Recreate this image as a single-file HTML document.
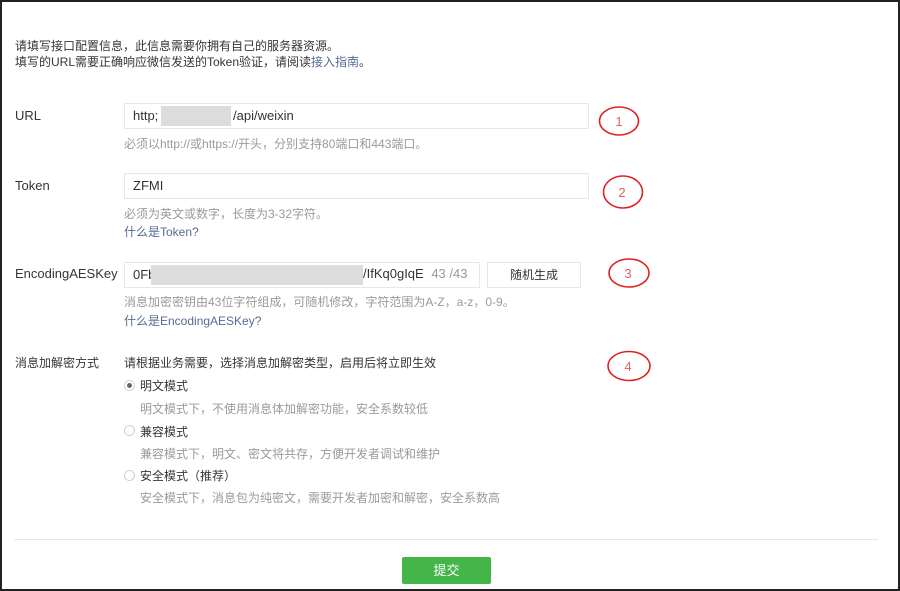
<!DOCTYPE html><html><head><meta charset="utf-8"><style>
body{margin:0;width:900px;height:591px;overflow:hidden;background:#fff;font-family:"Liberation Sans","Noto Sans CJK SC",sans-serif;}
.f{position:absolute;box-sizing:border-box;border:2px solid #222;left:0;top:0;width:900px;height:591px;}
.a{position:absolute;white-space:nowrap;}
.t{font-size:12px;color:#353535}
.g{font-size:12px;color:#9a9a9a}
.l{font-size:12px;color:#576b95}
.in{position:absolute;border:1px solid #e4e8eb;box-sizing:border-box;background:#fff;font-size:13px;color:#333;padding-left:8px;line-height:24px}
.blur{position:absolute;background:#ddd}
.rad{position:absolute;width:11px;height:11px;border:1px solid #d0d0d0;border-radius:50%;box-sizing:border-box}
</style></head><body>
<div class="f"></div>
<div class="a t" style="left:15px;top:37px">请填写接口配置信息，此信息需要你拥有自己的服务器资源。</div>
<div class="a t" style="left:15px;top:53px">填写的URL需要正确响应微信发送的Token验证，请阅读<span style="color:#576b95">接入指南</span>。</div>
<div class="a t" style="left:15px;top:108px;font-size:13px">URL</div>
<div class="in" style="left:124px;top:103px;width:465px;height:26px">http;</div>
<div class="a" style="left:233px;top:108px;font-size:13px;color:#333">/api/weixin</div>
<div class="blur" style="left:161px;top:106px;width:70px;height:20px"></div>
<div class="a g" style="left:124px;top:135px">必须以http://或https://开头，分别支持80端口和443端口。</div>
<div class="a t" style="left:15px;top:178px;font-size:13px">Token</div>
<div class="in" style="left:124px;top:173px;width:465px;height:26px">ZFMI</div>
<div class="a g" style="left:124px;top:205px">必须为英文或数字，长度为3-32字符。</div>
<div class="a l" style="left:124px;top:223px">什么是Token?</div>
<div class="a t" style="left:15px;top:266px;font-size:13px">EncodingAESKey</div>
<div class="in" style="left:124px;top:262px;width:356px;height:26px">0Fb</div>
<div class="blur" style="left:151px;top:265px;width:212px;height:20px"></div>
<div class="a" style="left:363px;top:266px;font-size:13px;color:#333">/IfKq0gIqE <span style="color:#999;margin-left:4px">43 /43</span></div>
<div class="in" style="left:487px;top:262px;width:94px;height:26px;padding:0;text-align:center;font-size:12px">随机生成</div>
<div class="a g" style="left:124px;top:293px">消息加密密钥由43位字符组成，可随机修改，字符范围为A-Z，a-z，0-9。</div>
<div class="a l" style="left:124px;top:312px">什么是EncodingAESKey?</div>
<div class="a t" style="left:15px;top:354px">消息加解密方式</div>
<div class="a t" style="left:124px;top:354px">请根据业务需要，选择消息加解密类型，启用后将立即生效</div>
<div class="rad" style="left:124px;top:380px"><div style="width:5px;height:5px;background:#666;border-radius:50%;margin:2px"></div></div>
<div class="a t" style="left:140px;top:377px">明文模式</div>
<div class="a g" style="left:140px;top:400px">明文模式下，不使用消息体加解密功能，安全系数较低</div>
<div class="rad" style="left:124px;top:425px"></div>
<div class="a t" style="left:140px;top:423px">兼容模式</div>
<div class="a g" style="left:140px;top:445px">兼容模式下，明文、密文将共存，方便开发者调试和维护</div>
<div class="rad" style="left:124px;top:470px"></div>
<div class="a t" style="left:140px;top:467px">安全模式（推荐）</div>
<div class="a g" style="left:140px;top:489px">安全模式下，消息包为纯密文，需要开发者加密和解密，安全系数高</div>
<div style="position:absolute;left:14px;top:539px;width:864px;height:1px;background:#e7e7eb"></div>
<div style="position:absolute;left:402px;top:557px;width:89px;height:27px;background:#44b549;border-radius:2px;color:#fff;font-size:13px;text-align:center;line-height:27px">提交</div>
<svg class="a" style="left:0;top:0" width="900" height="591">
<g fill="none" stroke="#e02020" stroke-width="1.6">
<ellipse cx="619" cy="121" rx="19.5" ry="14"/>
<ellipse cx="623" cy="192" rx="19.5" ry="16"/>
<ellipse cx="629" cy="273" rx="20" ry="14"/>
<ellipse cx="629" cy="366" rx="21" ry="14.5"/>
</g>
<g fill="#e06060" font-size="13" font-family="Liberation Sans" text-anchor="middle">
<text x="619" y="126">1</text><text x="622" y="197">2</text><text x="628" y="278">3</text><text x="628" y="371">4</text></g>
</svg>
</body></html>
